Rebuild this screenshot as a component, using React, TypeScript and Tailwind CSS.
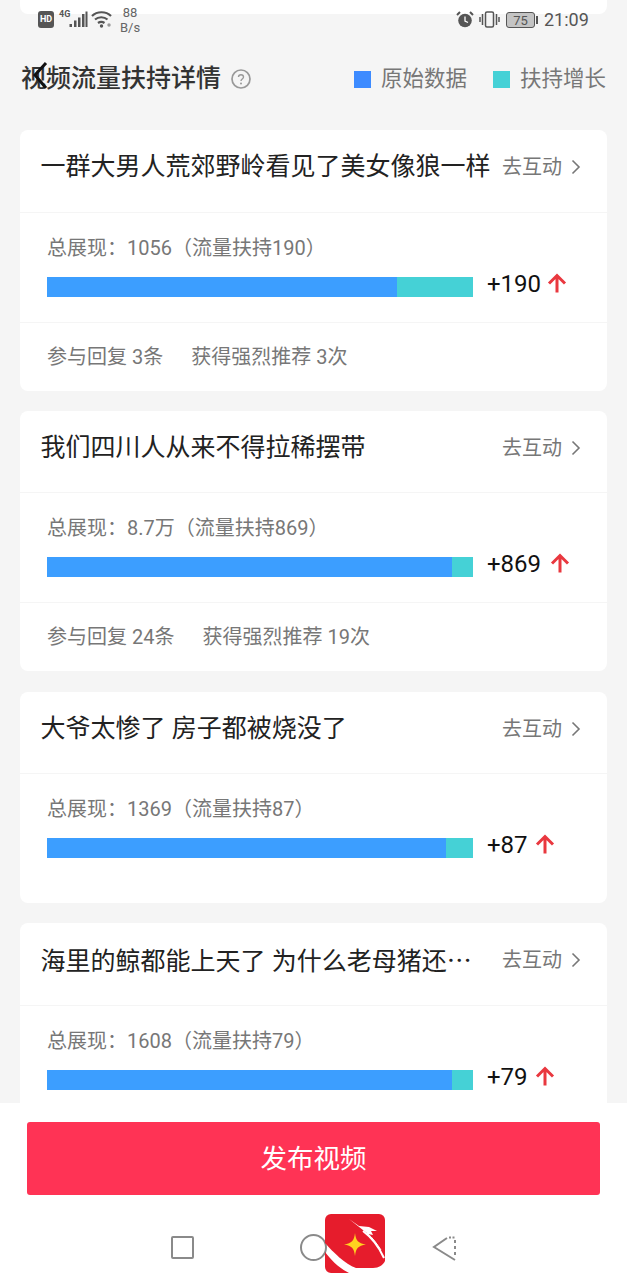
const font = { fontFamily: '"Roboto","Noto Sans CJK SC",sans-serif' };

type Item = {
  title: string;
  more?: boolean;
  label: string;
  blue: number;
  teal: number;
  plus: string;
  stats?: string[];
  head: string;
  arrow: string;
  body?: string;
  card?: string;
};

const items: Item[] = [
  { title: "一群大男人荒郊野岭看见了美女像狼一样", label: "总展现：1056（流量扶持190）", blue: 350, teal: 76, plus: "+190", stats: ["参与回复 3条", "获得强烈推荐 3次"], head: "h-[83px]", arrow: "ml-[6px]" },
  { title: "我们四川人从来不得拉稀摆带", label: "总展现：8.7万（流量扶持869）", blue: 405, teal: 21, plus: "+869", stats: ["参与回复 24条", "获得强烈推荐 19次"], head: "h-[82px]", arrow: "ml-[9px]" },
  { title: "大爷太惨了 房子都被烧没了", label: "总展现：1369（流量扶持87）", blue: 399, teal: 27, plus: "+87", head: "h-[82px]", arrow: "ml-[7px]", body: "h-[129px]", card: "mt-[1px]" },
  { title: "海里的鲸都能上天了 为什么老母猪还", more: true, label: "总展现：1608（流量扶持79）", blue: 405, teal: 21, plus: "+79", head: "h-[83px]", arrow: "ml-[7px]", body: "h-[130px]" },
];

function UpArrow() {
  return (
    <svg width="20" height="20" viewBox="0 0 20 20" fill="none" stroke="#e9383f" strokeWidth="3">
      <path d="M10 19.500V3M2 10.500L10 2.500l8 8" />
    </svg>
  );
}

function Card({ item }: { item: Item }) {
  return (
    <div className={`rounded-[8px] bg-white ${item.card ?? ""}`}>
      <div className={`flex items-center justify-between border-b border-[#f5f5f5] pb-[8px] pl-[20.500px] pr-[26px] ${item.head}`}>
        <span className="text-[25px] leading-[30px] text-[#222222]">
          {item.title}
          {item.more && <span className="font-['Noto_Sans_CJK_SC']">…</span>}
        </span>
        <span className="flex items-center gap-[9px] text-[20px] leading-[26px] text-[#777777]">
          去互动
          <svg width="10" height="16" viewBox="0 0 10 16" fill="none" stroke="#777777" strokeWidth="1.600">
            <path d="M1.500 1.500L8 8l-6.500 6.500" />
          </svg>
        </span>
      </div>
      <div className={`pl-[27px] pr-[34px] pt-[21px] ${item.stats ? "h-[110px] border-b border-[#f5f5f5]" : item.body}`}>
        <div className="text-[20px] leading-[28px] text-[#777777]">{item.label}</div>
        <div className="mt-[15px] flex items-start">
          <div className="flex h-[20px] w-[426px]">
            <div className="bg-[#3c9eff]" style={{ width: item.blue }} />
            <div className="bg-[#45d1d6]" style={{ width: item.teal }} />
          </div>
          <span className="ml-[14px] -mt-[7px] text-[24px] leading-[28px] text-[#111111]">{item.plus}</span>
          <span className={`-mt-[4px] flex ${item.arrow}`}><UpArrow /></span>
        </div>
      </div>
      {item.stats && (
        <div className="flex h-[68px] items-center gap-[28px] pl-[27px] text-[20px] text-[#777777]">
          <span>{item.stats[0]}</span>
          <span>{item.stats[1]}</span>
        </div>
      )}
    </div>
  );
}

function StatusBar() {
  return (
    <div className="absolute left-0 top-0 h-[36px] w-full text-[#555555]">
      <div className="absolute left-[38px] top-[11px] flex h-[17px] w-[16px] items-center justify-center rounded-[3px] bg-[#555555] text-[9px] font-bold leading-none text-white">HD</div>
      <div className="absolute left-[59px] top-[10px] text-[9px] font-bold leading-none">4G</div>
      <svg className="absolute left-[69px] top-[11px]" width="20" height="17" viewBox="0 0 20 17" fill="#555555">
        <rect x="0.500" y="13" width="2.500" height="3" />
        <rect x="5" y="9.500" width="2.500" height="6.500" />
        <rect x="9" y="6.500" width="2.500" height="9.500" />
        <rect x="13" y="3" width="2.500" height="13" />
        <rect x="16.500" y="0.500" width="2" height="15.500" />
      </svg>
      <svg className="absolute left-[91px] top-[10px]" width="22" height="18" viewBox="0 0 22 18" fill="none" stroke="#555555" strokeWidth="2.200">
        <path d="M1 6C6 1 15 1 20 6M4 9.500c3.500-3 9-3 12.500 0M7 13c2-1.500 4.500-1.500 6.500 0" />
        <circle cx="10.500" cy="16" r="1.700" fill="#555555" stroke="none" />
        <circle cx="18" cy="15" r="1.700" fill="#999999" stroke="none" />
      </svg>
      <div className="absolute left-[120px] top-[5px] text-center text-[13px] leading-[15px] text-[#666666]">
        <div>88</div>
        <div>B/s</div>
      </div>
      <svg className="absolute left-[456px] top-[11px]" width="18" height="17" viewBox="0 0 18 17">
        <circle cx="9" cy="9.500" r="6.800" fill="#555555" />
        <path d="M1 4L4 1M17 4L14 1" stroke="#555555" strokeWidth="2" />
        <path d="M9 5.500V10l3 1.500" stroke="#ffffff" strokeWidth="1.300" fill="none" />
      </svg>
      <svg className="absolute left-[479px] top-[11px]" width="21" height="17" viewBox="0 0 21 17" fill="none" stroke="#555555" strokeWidth="1.500">
        <rect x="6.500" y="1" width="8" height="15" rx="1.500" />
        <path d="M3.500 3v11M1 6v5M17.500 3v11M20 6v5" />
      </svg>
      <div className="absolute left-[506px] top-[12px] flex h-[16px] w-[29px] items-center justify-center rounded-[3px] border-[1.500px] border-[#555555] bg-[#c4c4c4] text-[13px] leading-none">75</div>
      <div className="absolute left-[536px] top-[16px] h-[8px] w-[2px] bg-[#555555]" />
      <div className="absolute left-[544px] top-[9px] text-[18px] leading-[22px]">21:09</div>
    </div>
  );
}

function Logo() {
  return (
    <svg className="absolute left-[325px] top-[1214px]" width="60" height="60" viewBox="0 0 60 60">
      <path d="M6 0H54a6 6 0 0 1 6 6V47C58 51 54 54 48 54H31C20 50 8 38 0 29V6a6 6 0 0 1 6-6z" fill="#e61c2c" />
      <path d="M0 38C6 46 14 54 24 59H6a6 6 0 0 1-6-6z" fill="#e61c2c" />
      <path d="M24 5L34 12L44 13L52 17L46 17L48 21L43 20z" fill="#ffffff" />
      <path d="M38 17C46 23 54 33 59 44" fill="none" stroke="#ffffff" strokeWidth="2" />
      <path d="M42 19C48 24 52 30 56 36" fill="none" stroke="#ffffff" strokeWidth="1" />
      <path d="M30 19C31 27 33 29 41 30.500C33 32 31 34 30 42C29 34 27 32 19 30.500C27 29 29 27 30 19z" fill="#ffd21f" />
    </svg>
  );
}

export default function App() {
  return (
    <div className="relative h-[1280px] w-[627px] overflow-hidden bg-[#f5f5f5]" style={font}>
      <div className="mx-[20px] h-[14px] rounded-b-[8px] bg-white" />
      <StatusBar />

      <div className="mt-[47px] flex h-[36px] items-center justify-between pl-[21px] pr-[21px]">
        <div className="flex items-center">
          <span className="text-[25px] leading-[36px] font-medium text-[#333333]">视频流量扶持详情</span>
          <svg className="ml-[10px]" width="20" height="20" viewBox="0 0 20 20" fill="none">
            <circle cx="10" cy="10" r="9" stroke="#999999" strokeWidth="1.700" />
            <path d="M7.500 8C7.500 5 12.500 5 12.500 8C12.500 10 10 10 10 12" stroke="#999999" strokeWidth="1.400" />
            <circle cx="10" cy="14.500" r="1" fill="#999999" />
          </svg>
        </div>
        <div className="flex items-center text-[21.500px] leading-[36px] text-[#777777]">
          <span className="h-[17px] w-[17px] bg-[#3d8bff]" />
          <span className="ml-[10px]">原始数据</span>
          <span className="ml-[26px] h-[17px] w-[17px] bg-[#45d1d6]" />
          <span className="ml-[10px]">扶持增长</span>
        </div>
      </div>
      <svg className="absolute left-[28px] top-[60px]" width="22" height="32" viewBox="0 0 22 32" fill="none" stroke="#111111" strokeWidth="3">
        <path d="M18 3L7 15L18 28" />
      </svg>

      <div className="mt-[33px] flex flex-col gap-[20px] px-[20px]">
        {items.map((item) => (
          <Card key={item.title} item={item} />
        ))}
      </div>

      <div className="absolute bottom-0 left-0 h-[177px] w-full bg-white px-[27px] pt-[19px]">
        <button className="h-[73px] w-[573px] rounded-[3px] bg-[#ff3355] text-[26.500px] text-[#ffffff]">发布视频</button>
      </div>

      <div className="absolute left-[171px] top-[1236px] h-[23px] w-[23px] rounded-[2px] border-[2px] border-[#8a8a8a]" />
      <div className="absolute left-[300px] top-[1234px] h-[27px] w-[27px] rounded-full border-[2px] border-[#8a8a8a]" />
      <Logo />
      <svg className="absolute left-[432px] top-[1235px]" width="24" height="26" viewBox="0 0 24 26" fill="none" stroke="#8a8a8a" strokeWidth="2">
        <path d="M15 3L2 12L23 25" />
        <path d="M17 2.500H23" strokeDasharray="2 1.500" />
        <path d="M23 5V23" strokeDasharray="3 3" />
      </svg>
    </div>
  );
}
